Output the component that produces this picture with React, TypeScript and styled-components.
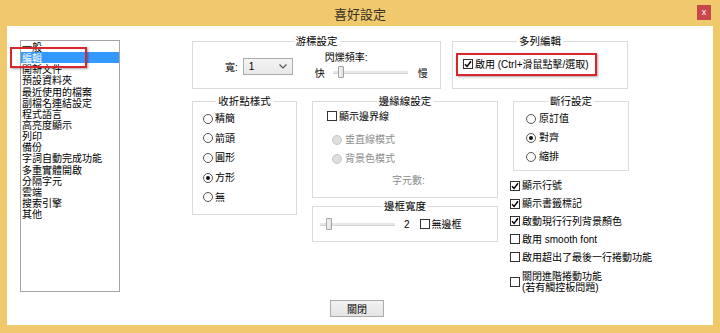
import React from "react";
import styled, { createGlobalStyle } from "styled-components";

const GlobalStyle = createGlobalStyle`
  html, body {
    margin: 0;
    padding: 0;
  }
  body {
    width: 720px;
    height: 333px;
    overflow: hidden;
    background: #f0c96d;
    font-family: "Liberation Sans", "Noto Sans CJK TC", sans-serif;
    font-size: 10px;
    color: #000;
  }
`;

const Frame = styled.div`
  width: 720px;
  height: 333px;
  box-sizing: border-box;
  background: #f0c96d;
  display: flex;
  flex-direction: column;
  padding: 0 7px 8px 7px;
`;

const TitleBar = styled.div`
  height: 26px;
  margin: 0 -7px;
  padding: 0 9px;
  display: grid;
  grid-template-columns: 1fr auto 1fr;
  align-items: center;
`;

const Title = styled.div`
  grid-column: 2;
  font-size: 13px;
  color: #3a3226;
`;

const CloseButton = styled.div`
  grid-column: 3;
  justify-self: end;
  align-self: start;
  margin-top: 5px;
  width: 14px;
  height: 15px;
  background: #c8474c;
  color: #fff;
  font-size: 9px;
  line-height: 14px;
  text-align: center;
`;

const Body = styled.div`
  flex: 1;
  position: relative;
  background: #fff;
  display: flex;
  flex-direction: column;
  padding: 9px 19px 0 13px;
`;

const Main = styled.div`
  display: flex;
  align-items: flex-start;
`;

const ListBox = styled.div`
  margin-top: 5px;
  width: 100px;
  height: 252px;
  box-sizing: border-box;
  border: 1px solid #a5a5a5;
  overflow: hidden;
`;

const ListItem = styled.div<{ $selected?: boolean }>`
  height: 11.15px;
  line-height: 13px;
  padding-left: 1px;
  white-space: nowrap;
  background: ${(p) => (p.$selected ? "#3399ff" : "transparent")};
  color: ${(p) => (p.$selected ? "#fff" : "#000")};
`;

const Settings = styled.div`
  margin-left: 72px;
  width: 437px;
  display: flex;
  flex-direction: column;
`;

const TopRow = styled.div`
  display: flex;
  gap: 11px;
`;

const Columns = styled.div`
  margin-top: 6px;
  display: grid;
  grid-template-columns: 105px 186px 116px;
  column-gap: 15px;
  align-items: start;
`;

const Column = styled.div`
  display: flex;
  flex-direction: column;
  min-width: 0;
`;

const Group = styled.fieldset<{ $w?: number; $h: number }>`
  margin: 0;
  padding: 0;
  min-width: 0;
  box-sizing: border-box;
  border: 1px solid #dcdcdc;
  width: ${(p) => (p.$w ? `${p.$w}px` : "auto")};
  height: ${(p) => p.$h}px;
  legend {
    margin: 0 auto;
    padding: 0 2px;
    font-size: 10.5px;
    line-height: 12px;
  }
`;

/* 游標設定 */
const CursorBody = styled.div`
  display: flex;
  align-items: center;
  padding: 5px 0 0 32px;
`;

const WidthField = styled.div`
  display: flex;
  align-items: center;
  gap: 5px;
`;

const Select = styled.div`
  width: 50px;
  height: 17px;
  box-sizing: border-box;
  border: 1px solid #acacac;
  background: linear-gradient(#f4f4f4, #e8e8e8);
  display: flex;
  align-items: center;
  justify-content: space-between;
  padding: 0 5px;
  svg {
    width: 8px;
    height: 5px;
  }
`;

const BlinkField = styled.div`
  margin-left: 22px;
  display: flex;
  flex-direction: column;
`;

const BlinkLabel = styled.div`
  padding-left: 10px;
  line-height: 12px;
`;

const SpeedRow = styled.div`
  height: 16px;
  display: flex;
  align-items: center;
`;

const Slider = styled.div<{ $w: number; $at: number; $inset?: boolean }>`
  position: relative;
  width: ${(p) => p.$w}px;
  height: 12px;
  margin: ${(p) => (p.$inset ? "0 10px 0 8px" : "0")};
  &::before {
    content: "";
    position: absolute;
    left: 0;
    right: 0;
    top: 5px;
    height: 2px;
    background: #e7e7e7;
    border-bottom: 1px solid #d6d6d6;
  }
  span {
    position: absolute;
    top: 0;
    left: ${(p) => p.$at}px;
    width: 6px;
    height: 12px;
    box-sizing: border-box;
    border: 1px solid #a3a3a3;
    border-radius: 1px;
    background: linear-gradient(90deg, #f4f4f4, #e2e2e2);
  }
`;

/* checkbox & radio */
const CheckRow = styled.div<{ $h?: number; $gap?: number }>`
  display: flex;
  align-items: center;
  gap: ${(p) => p.$gap ?? 2}px;
  height: ${(p) => (p.$h ? `${p.$h}px` : "auto")};
  white-space: nowrap;
`;

const Box = styled.span`
  flex: none;
  width: 10px;
  height: 10px;
  box-sizing: border-box;
  border: 1px solid #333;
  background: #fff;
  display: flex;
  align-items: center;
  justify-content: center;
  svg {
    width: 8px;
    height: 8px;
  }
`;

const Circle = styled.span<{ $on?: boolean; $disabled?: boolean }>`
  flex: none;
  width: 10px;
  height: 10px;
  box-sizing: border-box;
  border-radius: 50%;
  border: 1px solid ${(p) => (p.$disabled ? "#c6c6c6" : "#555")};
  background: ${(p) => (p.$disabled ? "#dedede" : "#fff")};
  display: flex;
  align-items: center;
  justify-content: center;
  &::after {
    content: "";
    width: 4px;
    height: 4px;
    border-radius: 50%;
    background: #111;
    display: ${(p) => (p.$on ? "block" : "none")};
  }
`;

const Label = styled.span<{ $disabled?: boolean }>`
  color: ${(p) => (p.$disabled ? "#8c8c8c" : "#000")};
  line-height: 11px;
`;

function Check({ on, children }: { on?: boolean; children?: React.ReactNode }) {
  return (
    <>
      <Box>
        {on && (
          <svg viewBox="0 0 8 8">
            <path d="M1 4.2 L3.1 6.4 L7 1.2" fill="none" stroke="#000" strokeWidth="1.5" />
          </svg>
        )}
      </Box>
      {children}
    </>
  );
}

const MultiBody = styled.div`
  padding: 9px 0 0 10px;
`;

const FoldBody = styled.div`
  padding: 2px 0 0 10px;
  ${CheckRow} {
    height: 19.6px;
  }
`;

const EdgeBody = styled.div`
  padding: 0 0 0 14px;
  display: flex;
  flex-direction: column;
`;

const Indented = styled.div<{ $top: number; $left: number }>`
  margin: ${(p) => p.$top}px 0 0 ${(p) => p.$left}px;
`;

const BorderBody = styled.div`
  padding: 3px 0 0 7px;
  display: flex;
  align-items: center;
  height: 18px;
`;

const Width = styled.span`
  margin: 0 10px 0 9px;
`;

const WrapBody = styled.div`
  padding: 2px 0 0 12px;
  ${CheckRow} {
    height: 19px;
  }
`;

const Options = styled.div`
  margin: 6px 0 0 -3px;
  display: flex;
  flex-direction: column;
  ${CheckRow} {
    height: 17.8px;
  }
`;

const TwoLine = styled.div`
  margin-top: 5px;
  display: flex;
  align-items: center;
  gap: 2px;
  white-space: nowrap;
`;

const Footer = styled.div`
  flex: 1;
  display: flex;
  align-items: center;
  justify-content: center;
`;

const Button = styled.div`
  width: 54px;
  height: 17px;
  box-sizing: border-box;
  border: 1px solid #acacac;
  background: linear-gradient(#f2f2f2, #e4e4e4);
  display: flex;
  align-items: center;
  justify-content: center;
`;

const Highlight = styled.div<{ $x: number; $y: number; $w: number; $h: number }>`
  position: absolute;
  left: ${(p) => p.$x}px;
  top: ${(p) => p.$y}px;
  width: ${(p) => p.$w}px;
  height: ${(p) => p.$h}px;
  box-sizing: border-box;
  border: 2px solid #d8262c;
  box-shadow: 1px 1px 2px rgba(0, 0, 0, 0.35);
  pointer-events: none;
`;

const pages = [
  "一般",
  "編輯",
  "開新文件",
  "預設資料夾",
  "最近使用的檔案",
  "副檔名連結設定",
  "程式語言",
  "高亮度顯示",
  "列印",
  "備份",
  "字詞自動完成功能",
  "多重實體開啟",
  "分隔字元",
  "雲端",
  "搜索引擎",
  "其他",
];

const foldStyles = ["精簡", "箭頭", "圓形", "方形", "無"];
const wrapModes = ["原訂值", "對齊", "縮排"];
const options: [string, boolean][] = [
  ["顯示行號", true],
  ["顯示書籤標記", true],
  ["啟動現行行列背景顏色", true],
  ["啟用 smooth font", false],
  ["啟用超出了最後一行捲動功能", false],
];

export default function App() {
  return (
    <>
      <GlobalStyle />
      <Frame>
        <TitleBar>
          <Title>喜好設定</Title>
          <CloseButton>x</CloseButton>
        </TitleBar>
        <Body>
          <Main>
            <ListBox>
              {pages.map((p, i) => (
                <ListItem key={p} $selected={i === 1}>
                  {p}
                </ListItem>
              ))}
            </ListBox>
            <Settings>
              <TopRow>
                <Group $w={249} $h={54}>
                  <legend>游標設定</legend>
                  <CursorBody>
                    <WidthField>
                      <span>寬:</span>
                      <Select>
                        <span>1</span>
                        <svg viewBox="0 0 8 5">
                          <path d="M0.5 0.5 L4 4 L7.5 0.5" fill="none" stroke="#555" strokeWidth="1.2" />
                        </svg>
                      </Select>
                    </WidthField>
                    <BlinkField>
                      <BlinkLabel>閃爍頻率:</BlinkLabel>
                      <SpeedRow>
                        <span>快</span>
                        <Slider $w={75} $at={5} $inset>
                          <span />
                        </Slider>
                        <span>慢</span>
                      </SpeedRow>
                    </BlinkField>
                  </CursorBody>
                </Group>
                <Group $w={176} $h={54}>
                  <legend>多列編輯</legend>
                  <MultiBody>
                    <CheckRow $h={16}>
                      <Check on>
                        <Label>啟用 (Ctrl+滑鼠點擊/選取)</Label>
                      </Check>
                    </CheckRow>
                  </MultiBody>
                </Group>
              </TopRow>
              <Columns>
                <Column>
                  <Group $h={120}>
                    <legend>收折點樣式</legend>
                    <FoldBody>
                      {foldStyles.map((s) => (
                        <CheckRow key={s}>
                          <Circle $on={s === "方形"} />
                          <Label>{s}</Label>
                        </CheckRow>
                      ))}
                    </FoldBody>
                  </Group>
                </Column>
                <Column>
                  <Group $h={103}>
                    <legend>邊緣線設定</legend>
                    <EdgeBody>
                      <CheckRow $h={18}>
                        <Check>
                          <Label>顯示邊界線</Label>
                        </Check>
                      </CheckRow>
                      <Indented $top={5} $left={5}>
                        <CheckRow $h={19} $gap={3}>
                          <Circle $disabled />
                          <Label $disabled>垂直線模式</Label>
                        </CheckRow>
                        <CheckRow $h={19} $gap={3}>
                          <Circle $disabled />
                          <Label $disabled>背景色模式</Label>
                        </CheckRow>
                      </Indented>
                      <Indented $top={3} $left={65}>
                        <CheckRow $h={18}>
                          <Label $disabled>字元數:</Label>
                        </CheckRow>
                      </Indented>
                    </EdgeBody>
                  </Group>
                  <Indented $top={2} $left={0}>
                    <Group $h={42}>
                      <legend>邊框寬度</legend>
                      <BorderBody>
                        <Slider $w={75} $at={6}>
                          <span />
                        </Slider>
                        <Width>2</Width>
                        <CheckRow>
                          <Check>
                            <Label>無邊框</Label>
                          </Check>
                        </CheckRow>
                      </BorderBody>
                    </Group>
                  </Indented>
                </Column>
                <Column>
                  <Group $h={76}>
                    <legend>斷行設定</legend>
                    <WrapBody>
                      {wrapModes.map((m) => (
                        <CheckRow key={m} $gap={3}>
                          <Circle $on={m === "對齊"} />
                          <Label>{m}</Label>
                        </CheckRow>
                      ))}
                    </WrapBody>
                  </Group>
                  <Options>
                    {options.map(([t, on]) => (
                      <CheckRow key={t}>
                        <Check on={on}>
                          <Label>{t}</Label>
                        </Check>
                      </CheckRow>
                    ))}
                    <TwoLine>
                      <Check>
                        <Label>
                          關閉進階捲動功能
                          <br />
                          (若有觸控板問題)
                        </Label>
                      </Check>
                    </TwoLine>
                  </Options>
                </Column>
              </Columns>
            </Settings>
          </Main>
          <Footer>
            <Button>關閉</Button>
          </Footer>
          <Highlight $x={3} $y={21} $w={77} $h={21} />
          <Highlight $x={449} $y={27} $w={141} $h={23} />
        </Body>
      </Frame>
    </>
  );
}
